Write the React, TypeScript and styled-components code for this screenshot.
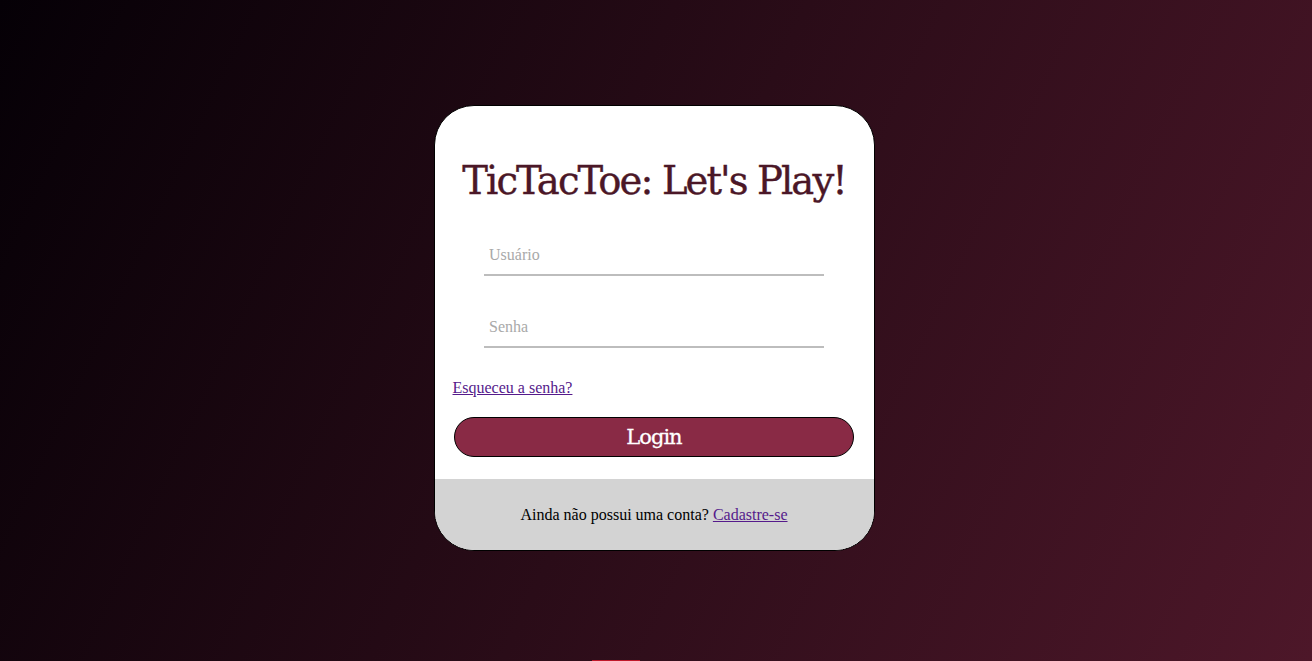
import React from "react";
import styled, { createGlobalStyle } from "styled-components";

const Global = createGlobalStyle`
  html, body { margin: 0; padding: 0; }
  body {
    font-family: "Liberation Serif", "Times New Roman", serif;
    background: linear-gradient(115deg, #050006 0%, #2a0c18 50%, #4d1729 100%);
    min-height: 100vh;
    overflow: hidden;
  }
`;

const Page = styled.div`
  min-height: 661px;
  display: flex;
  flex-direction: column;
  align-items: center;
`;

const Card = styled.div`
  margin-top: 105px;
  margin-right: 4px;
  width: 439px;
  height: 444px;
  background: #ffffff;
  border: 1px solid #000;
  border-radius: 40px;
  overflow: hidden;
  display: flex;
  flex-direction: column;
`;

const Body = styled.form`
  flex: 1;
  display: flex;
  flex-direction: column;
  padding: 0 18px;
`;

const Title = styled.h1`
  margin: 51px 0 0;
  text-align: center;
  font-family: "DejaVu Serif", "Liberation Serif", serif;
  font-weight: normal;
  font-size: 38.5px;
  letter-spacing: -1.9px;
  color: #4b1727;
  line-height: 48px;
  -webkit-text-stroke: 0.4px #4b1727;
`;

const Field = styled.input`
  display: block;
  align-self: center;
  width: 340px;
  box-sizing: border-box;
  height: 40px;
  margin-top: ${(p: { $top: number }) => p.$top}px;
  border: none;
  border-bottom: 2px solid #bdbdbd;
  outline: none;
  padding: 0 5px;
  font-family: "Liberation Serif", serif;
  font-size: 16px;
  background: transparent;
  &::placeholder { color: #a9a9a9; }
`;

const Forgot = styled.a`
  margin-top: 31px;
  align-self: flex-start;
  color: #551a8b;
  font-size: 16px;
  text-decoration: underline;
  line-height: 18px;
`;

const LoginButton = styled.button`
  margin-top: 20px;
  align-self: center;
  width: 400px;
  height: 40px;
  box-sizing: border-box;
  border: 1px solid #000;
  border-radius: 20px;
  background: #892a45;
  color: #fff;
  font-family: "DejaVu Serif", "Liberation Serif", serif;
  font-size: 21px;
  letter-spacing: -1px;
  -webkit-text-stroke: 0.3px #fff;
  cursor: pointer;
`;

const Footer = styled.div`
  height: 71px;
  flex-shrink: 0;
  background: #d3d3d3;
  display: flex;
  align-items: center;
  justify-content: center;
  font-size: 16px;
  color: #000;
  gap: 4px;
`;

const FooterLink = styled.a`
  color: #551a8b;
  text-decoration: underline;
`;

const Peek = styled.div`
  margin-top: auto;
  margin-right: 80px;
  width: 48px;
  height: 1px;
  background: #c0182a;
`;

export default function App() {
  return (
    <>
      <Global />
      <Page>
        <Card>
          <Body onSubmit={(e) => e.preventDefault()}>
            <Title>TicTacToe: Let's Play!</Title>
            <Field $top={31} placeholder="Usuário" />
            <Field $top={32} type="password" placeholder="Senha" />
            <Forgot href="#">Esqueceu a senha?</Forgot>
            <LoginButton type="submit">Login</LoginButton>
          </Body>
          <Footer>
            Ainda não possui uma conta? <FooterLink href="#">Cadastre-se</FooterLink>
          </Footer>
        </Card>
        <Peek />
      </Page>
    </>
  );
}
